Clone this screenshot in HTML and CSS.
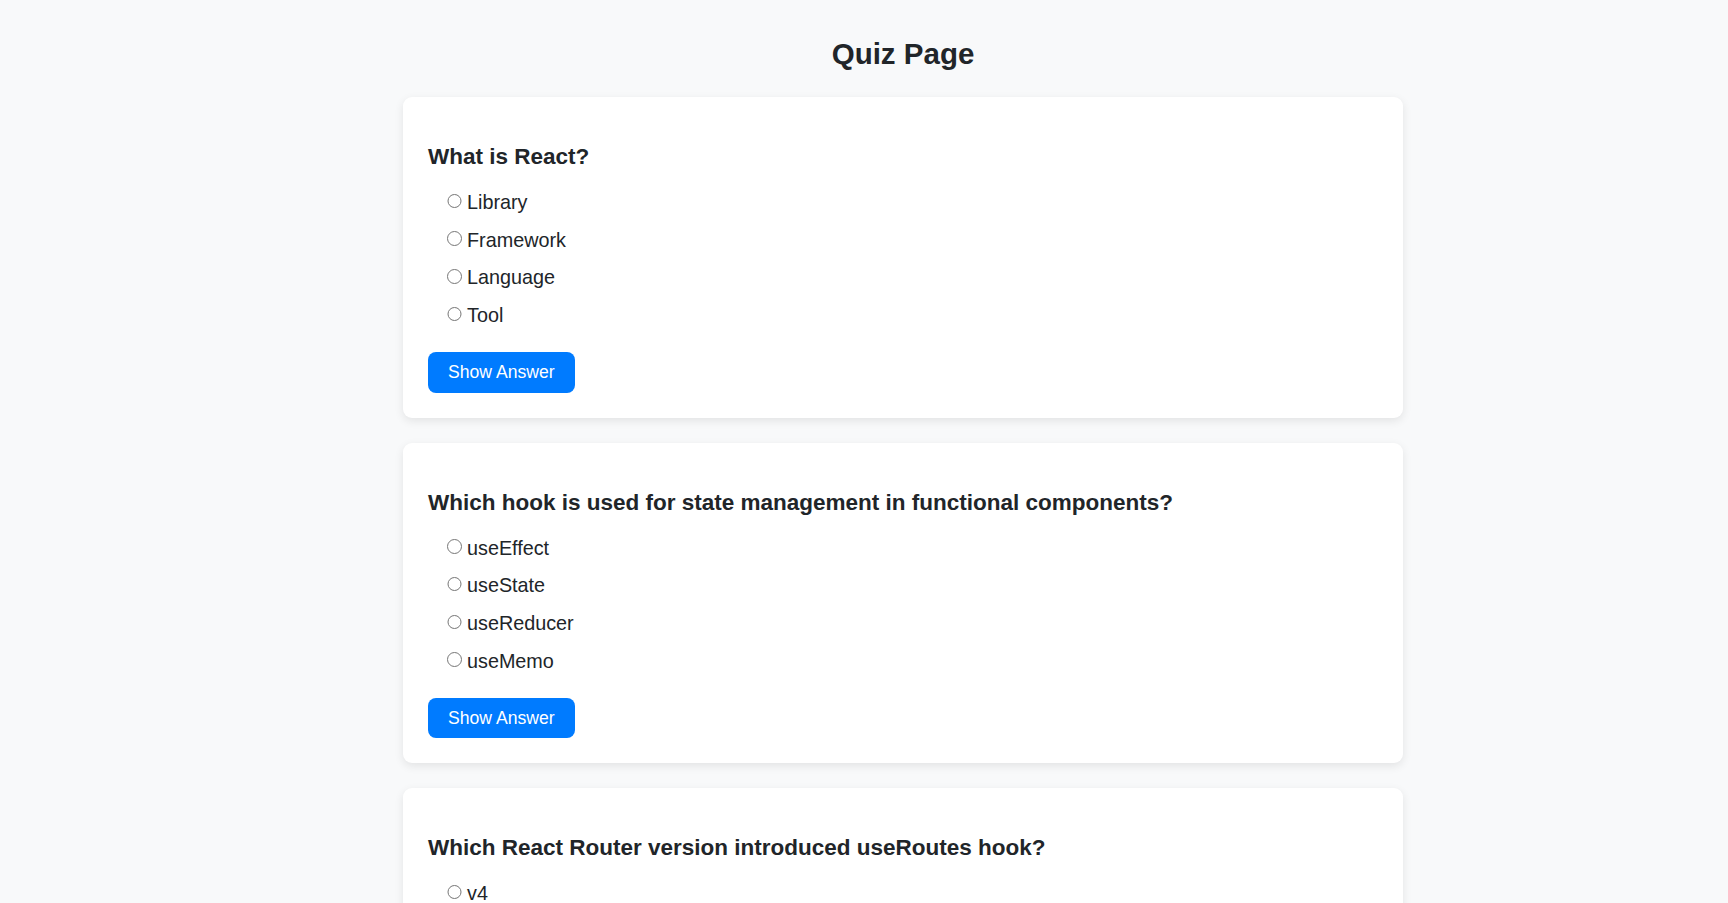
FILE: index.html
```html
<!DOCTYPE html>
<html lang="en">
<head>
<meta charset="utf-8">
<title>Quiz Page</title>
<link rel="stylesheet" href="styles.css">
</head>
<body>
<div class="page">
  <main class="quiz">
    <h1 class="quiz-title">Quiz Page</h1>

    <section class="card">
      <h3 class="question">What is React?</h3>
      <div class="options">
        <label class="option"><input type="radio" name="q1"><span>Library</span></label>
        <label class="option"><input type="radio" name="q1"><span>Framework</span></label>
        <label class="option"><input type="radio" name="q1"><span>Language</span></label>
        <label class="option"><input type="radio" name="q1"><span>Tool</span></label>
      </div>
      <button class="btn">Show Answer</button>
    </section>

    <section class="card">
      <h3 class="question">Which hook is used for state management in functional components?</h3>
      <div class="options">
        <label class="option"><input type="radio" name="q2"><span>useEffect</span></label>
        <label class="option"><input type="radio" name="q2"><span>useState</span></label>
        <label class="option"><input type="radio" name="q2"><span>useReducer</span></label>
        <label class="option"><input type="radio" name="q2"><span>useMemo</span></label>
      </div>
      <button class="btn">Show Answer</button>
    </section>

    <section class="card">
      <h3 class="question">Which React Router version introduced useRoutes hook?</h3>
      <div class="options">
        <label class="option"><input type="radio" name="q3"><span>v4</span></label>
        <label class="option"><input type="radio" name="q3"><span>v5</span></label>
        <label class="option"><input type="radio" name="q3"><span>v6</span></label>
        <label class="option"><input type="radio" name="q3"><span>v7</span></label>
      </div>
      <button class="btn">Show Answer</button>
    </section>
  </main>
</div>
</body>
</html>
```

FILE: styles.css
```css
html, body {
  margin: 0;
  padding: 0;
  background: #f8f9fa;
}

body {
  font-family: "Liberation Sans", Arial, sans-serif;
  color: #212529;
}

.page {
  padding: 37px 0 40px 78px;
}

.quiz {
  width: 1000px;
  margin: 0 auto;
  display: flex;
  flex-direction: column;
  gap: 25px;
}

.quiz-title {
  margin: 0 0 1px;
  font-size: 29.5px;
  font-weight: 700;
  text-align: center;
  line-height: normal;
}

.card {
  background: #ffffff;
  border-radius: 9px;
  box-shadow: 0 3px 10px rgba(0, 0, 0, 0.09);
  padding: 25px;
  display: flex;
  flex-direction: column;
  align-items: flex-start;
}

.question {
  margin: 22px 0 21px;
  font-size: 22.5px;
  font-weight: 700;
  line-height: normal;
}

.options {
  display: flex;
  flex-direction: column;
  gap: 14.95px;
  padding-left: 19px;
  margin-bottom: 25px;
}

.option {
  display: flex;
  align-items: center;
  font-size: 19.8px;
  line-height: 22.8px;
  height: 22.8px;
}

.option input {
  width: 14.5px;
  height: 14.5px;
  margin: 0 5.5px 3px 0;
  accent-color: #555;
}

.btn {
  font-family: "Liberation Sans", Arial, sans-serif;
  font-size: 17.6px;
  line-height: 20.6px;
  color: #ffffff;
  background: #007bff;
  border: none;
  border-radius: 8px;
  padding: 10px 20px;
  cursor: pointer;
}
```
